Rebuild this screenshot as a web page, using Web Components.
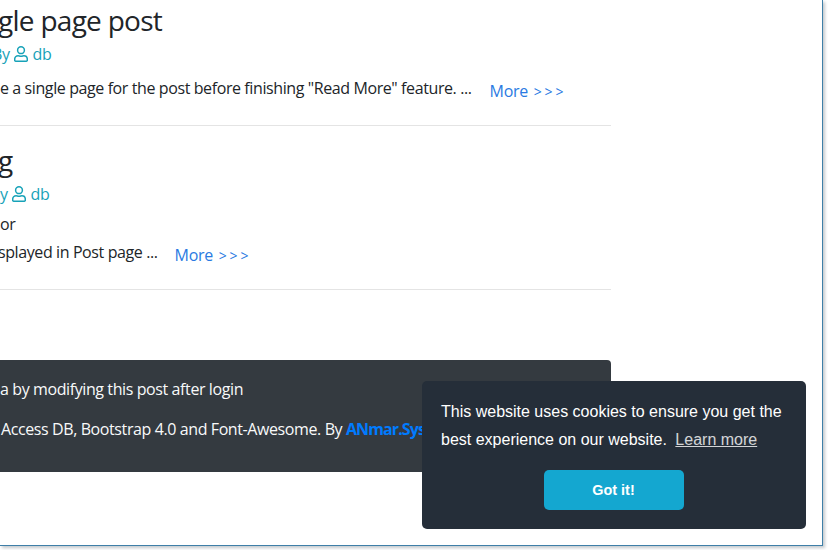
<!DOCTYPE html>
<html><head><meta charset="utf-8">
<style>
html,body{margin:0;padding:0;background:#fff;}
body{font-family:"Open Sans","Noto Sans",sans-serif;width:828px;height:550px;overflow:hidden;}
</style></head>
<body>
<app-window>
  <post-item>
    <post-title style="--shift:-2px">gle page post</post-title>
    <post-meta style="--shift:-8px">By</post-meta>
    <post-line>e a single page for the post before finishing "Read More" feature. ...<more-link></more-link></post-line>
  </post-item>
  <post-item>
    <post-title style="--shift:-2px">g</post-title>
    <post-meta style="--shift:-10px;--after:6px">By</post-meta>
    <post-line>or</post-line>
    <post-line style="--shift:-2px;--gap:17px">splayed in Post page ...<more-link></more-link></post-line>
  </post-item>
  <site-footer>
    <footer-line>a by modifying this post after login</footer-line>
    <footer-line style="--shift:1px">Access DB, Bootstrap 4.0 and Font-Awesome. By <b>ANmar.Systems</b></footer-line>
  </site-footer>
  <cookie-banner slot="overlay"></cookie-banner>
</app-window>
<script>
function def(name, html){
  customElements.define(name, class extends HTMLElement{
    constructor(){super();this.attachShadow({mode:'open'}).innerHTML=html;}
  });
}
const userIcon='<svg width="14" height="16" viewBox="0 0 14 16" fill="none" stroke="currentColor" stroke-width="1.5"><circle cx="7" cy="4.2" r="3.4"/><path d="M1.6 15.2h10.8c.7 0 .9-.4.9-.9v-1c0-2-1.5-3.5-3.4-3.5-.9 0-1.5.5-2.9.5s-2-.5-2.9-.5c-1.900 0-3.400 1.500-3.400 3.500v1c0 .5.200.900.900.900z"/></svg>';
def('app-window',`<style>
:host{display:block;box-sizing:border-box;width:823px;height:546px;border-right:1px solid #3f7fa8;border-bottom:1px solid #3f7fa8;box-shadow:2px 2px 3px #c4c9cd;background:#fff;position:relative;}
.col{width:611px;overflow:hidden;height:100%;}
</style><div class="col"><slot></slot></div><slot name="overlay"></slot>`);
def('post-item',`<style>
:host{display:block;border-bottom:1px solid #e4e4e4;padding-bottom:25px;margin-top:17px;color:#212529;}
:host(:first-child){margin-top:3px;}
</style><slot></slot>`);
def('post-title',`<style>
:host{display:block;font-size:28px;line-height:34px;color:#212529;white-space:nowrap;margin-left:var(--shift,0);letter-spacing:-.72px;margin-bottom:5px;}
</style><slot></slot>`);
def('post-meta',`<style>
:host{display:flex;align-items:center;height:24px;font-size:16px;color:#17a2b8;white-space:nowrap;margin-left:var(--shift,0);letter-spacing:-.4px;margin-bottom:var(--after,10px);}
svg{display:block;margin:0 5px 0 4px;}
</style><slot></slot>${userIcon}<span>db</span>`);
def('post-line',`<style>
:host{display:flex;height:24px;line-height:24px;font-size:16px;color:#212529;white-space:nowrap;margin-left:var(--shift,0);letter-spacing:-.4px;margin-bottom:4px;}
:host(:last-child){margin-bottom:0;}
</style><slot></slot>`);
def('more-link',`<style>
:host{display:inline-block;margin-left:var(--gap,18px);padding-top:3px;font-size:16px;color:#2a7ae2;letter-spacing:-.3px;}
.a{letter-spacing:2.8px;margin-left:2px;font-size:14px;}
</style>More <span class="a">&gt;&gt;&gt;</span>`);
def('site-footer',`<style>
:host{display:block;box-sizing:border-box;height:112px;margin-top:70px;padding-top:17px;background:#343a40;color:#f8f9fa;border-radius:0 4px 4px 0;}
</style><slot></slot>`);
def('footer-line',`<style>
:host{display:block;height:24px;line-height:24px;font-size:16px;white-space:nowrap;margin-left:var(--shift,0);margin-bottom:16px;letter-spacing:-.4px;}
::slotted(b){color:#007bff;font-weight:700;letter-spacing:-.9px;}
</style><slot></slot>`);
def('cookie-banner',`<style>
:host{position:absolute;right:16px;bottom:16px;box-sizing:border-box;width:384px;height:148px;padding:17px 20px 19px 19px;background:#252e39;color:#fff;border-radius:5px;font:16px/28px "Liberation Sans",Arial,sans-serif;display:flex;flex-direction:column;}
.m{white-space:nowrap;}
a{color:#fff;opacity:.8;text-decoration:underline;padding:0 .25em;}
.b{align-self:center;width:140px;height:40px;margin-top:16px;background:#14a7d0;border-radius:5px;font-weight:700;font-size:14.4px;line-height:40px;text-align:center;}
</style><div class="m">This website uses cookies to ensure you get the<br>best experience on our website. <a>Learn more</a></div><div class="b">Got it!</div>`);
</script>
</body></html>
